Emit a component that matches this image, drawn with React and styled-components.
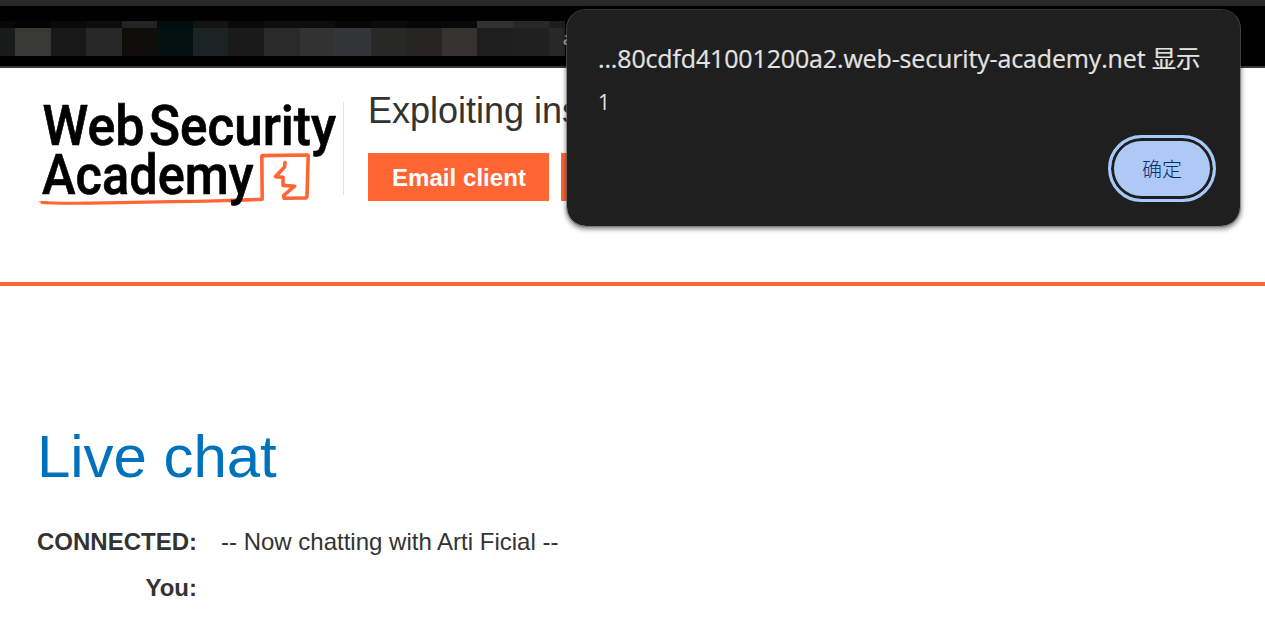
import React from "react";
import styled, { createGlobalStyle } from "styled-components";

const GlobalStyle = createGlobalStyle`
  *, *::before, *::after { box-sizing: border-box; }
  html, body { margin: 0; padding: 0; background: #fff; }
  body { overflow: hidden; font-family: "Liberation Sans", Arial, sans-serif; color: #333332; }
`;

const Page = styled.div`
  position: relative;
  width: 1265px;
  height: 635px;
  overflow: hidden;
  background: #fff;
`;

const BrowserBar = styled.div`
  height: 68px;
  background: #000;
  border-top: 6px solid #282828;
  border-bottom: 2px solid #3b393b;
  padding-top: 15px;
  display: flex;
`;

const Cell = styled.div`
  width: ${(p) => p.$w}px;
  height: 35px;
  background: ${(p) => p.$body};
  border-top: 7px solid ${(p) => p.$cap};
`;

const AddressText = styled.span`
  width: 8px;
  margin-top: 6px;
  margin-left: -2px;
  font: 18px/22px "Open Sans", sans-serif;
  color: #c3ccd5;
`;

const Header = styled.header`
  height: 218px;
  border-bottom: 4px solid #ff6633;
  padding-left: 37px;
  display: flex;
`;

const Logo = styled.svg`
  display: block;
  width: 306px;
  height: 150px;
  flex: none;
  overflow: visible;
`;

const Divider = styled.div`
  width: 1px;
  height: 93px;
  margin: 34px 24px 0 0;
  background: #e3e3e3;
`;

const LabInfo = styled.div`
  padding-top: 21px;
  white-space: nowrap;
`;

const LabTitle = styled.h2`
  margin: 0 0 20px;
  font-size: 36px;
  line-height: 44px;
  font-weight: 400;
`;

const Actions = styled.div`
  display: flex;
  gap: 12px;
`;

const ActionButton = styled.a`
  width: ${(p) => p.$w}px;
  height: 48px;
  padding-left: 24px;
  background: #ff6633;
  color: #fff;
  font-size: 24px;
  line-height: 50px;
  letter-spacing: 0.05px;
  font-weight: 700;
`;

const Main = styled.main`
  padding: 137px 37px 0;
`;

const Title = styled.h1`
  margin: 0;
  font-size: 60px;
  line-height: 68px;
  letter-spacing: -0.05px;
  font-weight: 400;
  color: #0071bc;
`;

const ChatLog = styled.div`
  margin-top: 28px;
`;

const ChatRow = styled.div`
  height: 46px;
  display: grid;
  grid-template-columns: 160px auto;
  column-gap: 24px;
  align-items: center;
  font-size: 24px;
`;

const Speaker = styled.div`
  font-weight: 700;
  text-align: right;
`;

const Dialog = styled.div`
  position: absolute;
  left: 566px;
  top: 9px;
  width: 675px;
  height: 218px;
  padding: 30px 24px 24px 31px;
  display: flex;
  flex-direction: column;
  background: #1f1f1f;
  background-clip: padding-box;
  border: 1px solid rgba(110, 110, 110, 0.6);
  border-top-color: #363636;
  border-radius: 20px;
  box-shadow: 0 2px 5px rgba(0, 0, 0, 0.5);
  color: #e3e3e3;
  font-family: "Open Sans", "Noto Sans CJK SC", sans-serif;
`;

const DialogTitle = styled.div`
  font-size: 25px;
  line-height: 36px;
  height: 36px;
  letter-spacing: -0.15px;
  white-space: nowrap;
  -webkit-text-stroke: 0.2px #e3e3e3;
`;

const Verb = styled.span`
  font-size: 24.5px;
`;

const DialogMessage = styled.div`
  margin-top: 12px;
  font-size: 21px;
  line-height: 28px;
`;

const OkButton = styled.button`
  align-self: flex-end;
  margin-top: auto;
  width: 108px;
  height: 67px;
  padding: 0;
  border: 3px solid #a8c7fa;
  border-radius: 34px;
  background: #afc9f7;
  box-shadow: inset 0 0 0 3px #1f1f1f;
  color: #062e6f;
  font: 300 20px "Noto Sans CJK SC", sans-serif;
`;

const cells = [
  [15, "#191b1a", "#050807"], [36, "#383935", "#020202"], [35, "#181818", "#090909"],
  [36, "#282828", "#0d0d0d"], [35, "#100e0b", "#232323"], [36, "#02120e", "#010e0b"],
  [35, "#1c2323", "#131313"], [36, "#1a1a1a", "#090909"], [36, "#2a2a2a", "#0e0e0c"],
  [35, "#323232", "#0d0d0d"], [36, "#343539", "#070707"], [35, "#282826", "#0b0b0b"],
  [36, "#272523", "#080808"], [35, "#343330", "#090909"], [36, "#1e1e1e", "#303231"],
  [36, "#202020", "#272727"], [16, "#282828", "#1d1d1d"],
];

const Wordmark = styled.text`
  font: 500 56px Roboto, sans-serif;
  fill: #000;
  stroke: #000;
  stroke-width: 0.7px;
`;

function AcademyLogo() {
  return (
    <Logo viewBox="37 68 306 150">
      <Wordmark x="42.5" y="145.2" textLength="102" lengthAdjust="spacingAndGlyphs">Web</Wordmark>
      <Wordmark x="149" y="145.2" textLength="187" lengthAdjust="spacingAndGlyphs">Security</Wordmark>
      <g fill="none" stroke="#ff6633" strokeWidth="3.6" strokeLinejoin="round" strokeLinecap="round">
        <path d="M230 200.6 L262.2 199.2 L261.8 156 Q262 155.6 263 155.6 L307 155 Q308.2 155 308.2 156 L307 196 Q306.8 198 305 198 L284 198.2 L283.6 195.5 L294.6 186.2 L283 185.4 L283 177.4 L275.5 176.6 L284.6 167 L285 162.5" />
        <path d="M42 202.5 C60 204 80 203 103 202.8 C145 202 185 201.8 232 200.4" strokeWidth="3.2" />
      </g>
      <Wordmark x="42" y="194" textLength="211.5" lengthAdjust="spacingAndGlyphs">Academy</Wordmark>
      <path d="M37.5 201.4 L48 201.2 L48 204.6 Z" fill="#ff6633" />
    </Logo>
  );
}

export default function App() {
  return (
    <>
      <GlobalStyle />
      <Page>
        <BrowserBar>
          {cells.map(([w, body, cap], i) => (
            <Cell key={i} $w={w} $body={body} $cap={cap} />
          ))}
          <AddressText>a</AddressText>
        </BrowserBar>
        <Header>
          <AcademyLogo />
          <Divider />
          <LabInfo>
            <LabTitle>Exploiting ins</LabTitle>
            <Actions>
              <ActionButton $w={181}>Email client</ActionButton>
              <ActionButton $w={40} />
            </Actions>
          </LabInfo>
        </Header>
        <Main>
          <Title>Live chat</Title>
          <ChatLog>
            <ChatRow>
              <Speaker>CONNECTED:</Speaker>
              <div>-- Now chatting with Arti Ficial --</div>
            </ChatRow>
            <ChatRow>
              <Speaker>You:</Speaker>
            </ChatRow>
          </ChatLog>
        </Main>
        <Dialog role="alertdialog">
          <DialogTitle>...80cdfd41001200a2.web-security-academy.net <Verb>显示</Verb></DialogTitle>
          <DialogMessage>1</DialogMessage>
          <OkButton>确定</OkButton>
        </Dialog>
      </Page>
    </>
  );
}
